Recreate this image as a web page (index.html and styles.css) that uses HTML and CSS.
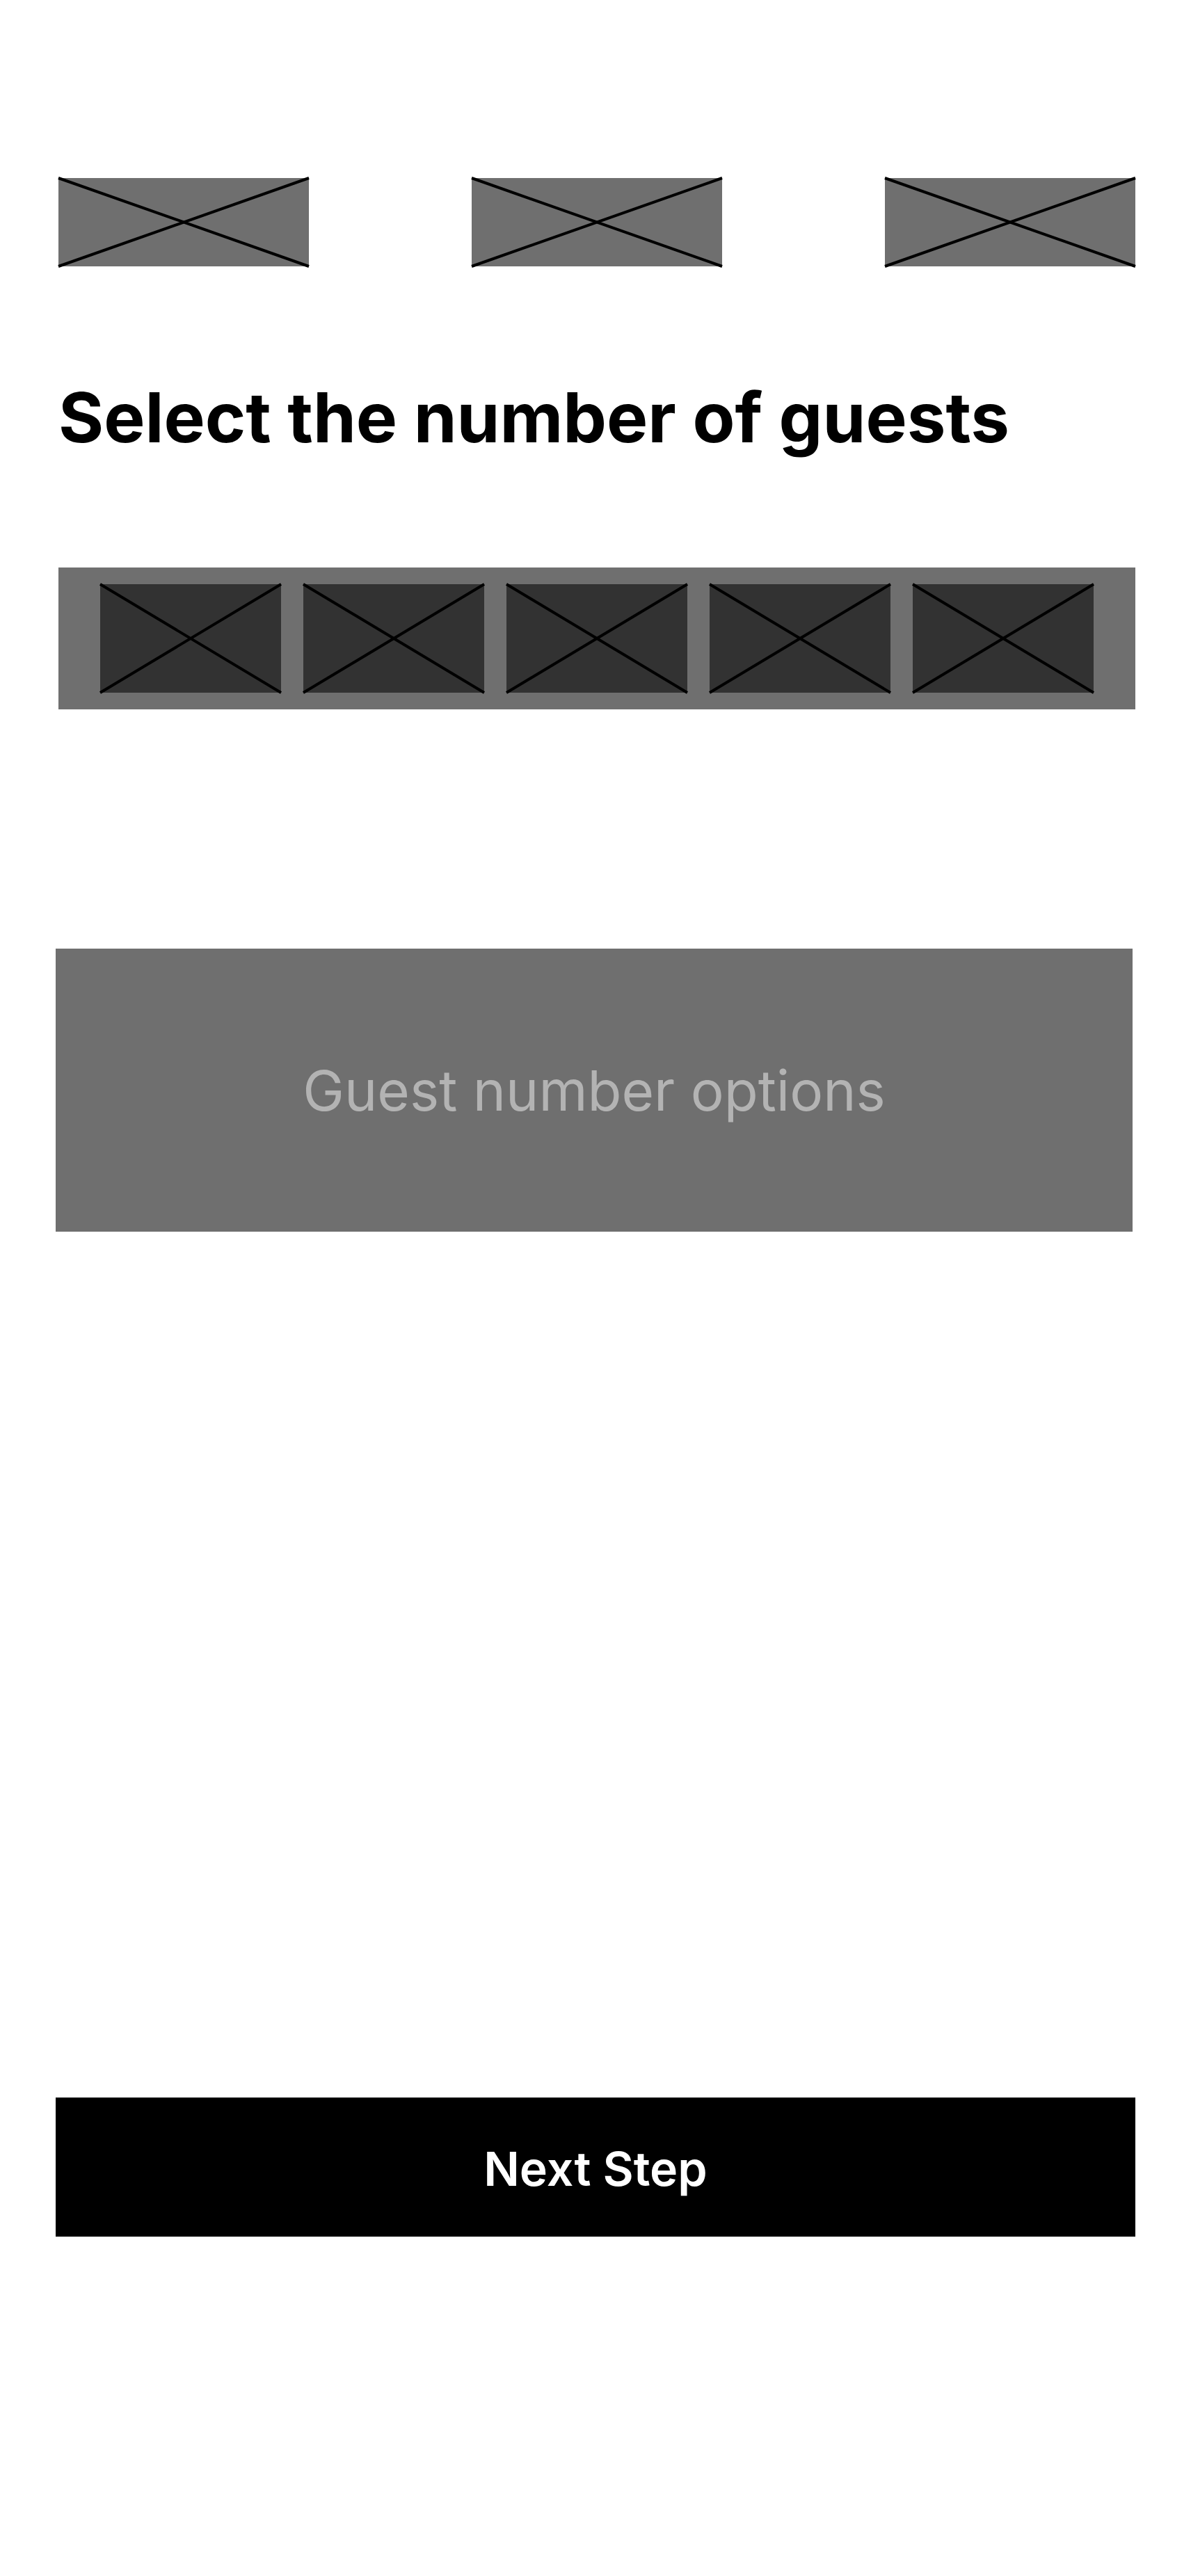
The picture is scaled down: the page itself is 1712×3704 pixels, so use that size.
FILE: index.html
```html
<!DOCTYPE html>
<html lang="en">
<head>
  <meta charset="UTF-8">
  <title>Select guests</title>
  <link rel="stylesheet" href="styles.css">
</head>
<body>

  <div class="screen">

    <div class="thumbs">
      <div class="thumb"><svg class="cross" viewBox="0 0 100 100" preserveAspectRatio="none"><line x1="0" y1="0" x2="100" y2="100"/><line x1="100" y1="0" x2="0" y2="100"/></svg></div>
      <div class="thumb"><svg class="cross" viewBox="0 0 100 100" preserveAspectRatio="none"><line x1="0" y1="0" x2="100" y2="100"/><line x1="100" y1="0" x2="0" y2="100"/></svg></div>
      <div class="thumb"><svg class="cross" viewBox="0 0 100 100" preserveAspectRatio="none"><line x1="0" y1="0" x2="100" y2="100"/><line x1="100" y1="0" x2="0" y2="100"/></svg></div>
    </div>

    <h1>Select the number of guests</h1>

    <div class="guest-bar">
      <div class="guest"><svg class="cross" viewBox="0 0 100 100" preserveAspectRatio="none"><line x1="0" y1="0" x2="100" y2="100"/><line x1="100" y1="0" x2="0" y2="100"/></svg></div>
      <div class="guest"><svg class="cross" viewBox="0 0 100 100" preserveAspectRatio="none"><line x1="0" y1="0" x2="100" y2="100"/><line x1="100" y1="0" x2="0" y2="100"/></svg></div>
      <div class="guest"><svg class="cross" viewBox="0 0 100 100" preserveAspectRatio="none"><line x1="0" y1="0" x2="100" y2="100"/><line x1="100" y1="0" x2="0" y2="100"/></svg></div>
      <div class="guest"><svg class="cross" viewBox="0 0 100 100" preserveAspectRatio="none"><line x1="0" y1="0" x2="100" y2="100"/><line x1="100" y1="0" x2="0" y2="100"/></svg></div>
      <div class="guest"><svg class="cross" viewBox="0 0 100 100" preserveAspectRatio="none"><line x1="0" y1="0" x2="100" y2="100"/><line x1="100" y1="0" x2="0" y2="100"/></svg></div>
    </div>

    <div class="options">Guest number options</div>

    <button class="next">Next Step</button>

  </div>

</body>
</html>
```

FILE: styles.css
```css
body {
  margin: 0;
  background: #ffffff;
  font-family: Inter, "Noto Sans", sans-serif;
  color: #000;
}
.screen {
  height: 3704px;
  padding: 256px 80px 0;
  box-sizing: border-box;
}
.cross {
  display: block;
  width: 100%;
  height: 100%;
  overflow: visible;
}
.cross line {
  stroke: #000;
  stroke-width: 4px;
  vector-effect: non-scaling-stroke;
}
.thumbs {
  display: flex;
  justify-content: space-between;
  margin-left: 4px;
}
.thumb {
  width: 360px;
  height: 127px;
  background: #6f6f6f;
}
h1 {
  margin: 157px 0 0 4px;
  font-size: 99.5px;
  line-height: 120px;
  font-weight: 700;
}
.guest-bar {
  display: flex;
  gap: 32px;
  margin: 156px 0 0 4px;
  padding: 24px 60px;
  background: #6f6f6f;
}
.guest {
  width: 260px;
  height: 156px;
  background: #323232;
}
.options {
  display: flex;
  align-items: center;
  justify-content: center;
  height: 407px;
  margin: 344px 4px 0 0;
  background: #6f6f6f;
  color: #b3b3b3;
  font-size: 80px;
}
.next {
  display: block;
  width: 100%;
  height: 200px;
  margin-top: 1245px;
  padding-top: 4px;
  border: none;
  background: #000;
  color: #fff;
  font-family: Inter, "Noto Sans", sans-serif;
  font-size: 68px;
  font-weight: 600;
  cursor: pointer;
}
```
